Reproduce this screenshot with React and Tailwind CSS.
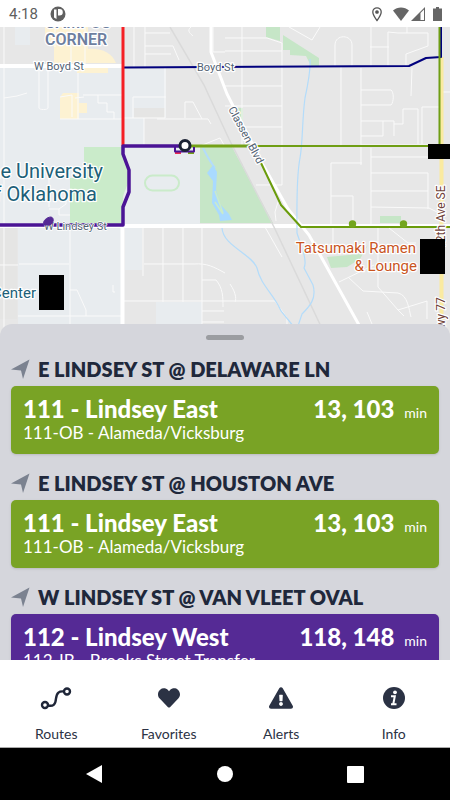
import React from "react";
import { FaHeart, FaExclamationTriangle } from "react-icons/fa";

const stops = [
  { name: "E LINDSEY ST @ DELAWARE LN", route: "111 - Lindsey East", detail: "111-OB - Alameda/Vicksburg", times: "13, 103", color: "bg-[#79a325]" },
  { name: "E LINDSEY ST @ HOUSTON AVE", route: "111 - Lindsey East", detail: "111-OB - Alameda/Vicksburg", times: "13, 103", color: "bg-[#79a325]" },
  { name: "W LINDSEY ST @ VAN VLEET OVAL", route: "112 - Lindsey West", detail: "112-IB - Brooks Street Transfer", times: "118, 148", color: "bg-[#552a95]" },
];

function RouteIcon() {
  return (
    <svg viewBox="0 0 32 24" className="h-6 w-8" fill="none" stroke="#1f2638" strokeWidth="2.400">
      <circle cx="5" cy="19" r="3" />
      <circle cx="27" cy="5.500" r="3" />
      <path d="M8 19.500c5 1 7.500-.5 8-7 .8-6 3-7.500 8-7" />
    </svg>
  );
}

function InfoIcon() {
  return (
    <svg viewBox="0 0 22 22" className="size-[22px]">
      <circle cx="11" cy="11" r="11" fill="#2b3244" />
      <circle cx="12" cy="5.300" r="1.900" fill="#fff" />
      <path d="M8 9.300h3.800l-1.500 7.700M8 17.300h5.500" fill="none" stroke="#fff" strokeWidth="2" />
    </svg>
  );
}

const tabs = [
  { label: "Routes", icon: <RouteIcon /> },
  { label: "Favorites", icon: <FaHeart className="size-[22px]" /> },
  { label: "Alerts", icon: <FaExclamationTriangle className="size-6" /> },
  { label: "Info", icon: <InfoIcon /> },
];

function StatusBar() {
  return (
    <header className="flex h-[27px] shrink-0 items-center justify-between bg-white pr-2 pl-[9px] text-[#606060]">
      <div className="flex items-center gap-3">
        <span className="text-[15px] leading-5">4:18</span>
        <svg viewBox="0 0 16 16" className="size-4" aria-hidden="true">
          <circle cx="8" cy="8" r="7.500" fill="#606060" />
          <path d="M4 3.500h2.500v9.500L4 11.500zM8 3h1.500a3.300 3.300 0 0 1 0 6.600H8z" fill="#fff" />
        </svg>
      </div>
      <div className="flex items-center" aria-hidden="true">
        <svg viewBox="0 0 12 16" className="mr-[10px] h-4 w-3" fill="none" stroke="#555" strokeWidth="1.300">
          <path d="M6 14.500C3 10.500 1.800 8 1.800 6a4.200 4.200 0 0 1 8.400 0c0 2-1.200 4.500-4.200 8.500z" />
          <circle cx="6" cy="6" r="1.200" fill="#555" />
        </svg>
        <svg viewBox="0 0 16 14" className="mr-[2px] h-[14px] w-4">
          <path d="M8 14 0 3.500C4.500-.5 11.500-.5 16 3.500z" fill="#666" />
        </svg>
        <svg viewBox="0 0 14 14" className="mr-2 size-[14px]">
          <path d="M14 0v14H0z" fill="#666" />
          <path d="M9.500 6 13 2.500V13H9.500z" fill="#fff" />
        </svg>
        <svg viewBox="0 0 9 14" className="h-[14px] w-[9px]">
          <path d="M3 0h3v1.500h3V14H0V1.500h3z" fill="#666" />
        </svg>
      </div>
    </header>
  );
}

function TransitMap() {
  return (
    <svg viewBox="0 27 450 310" preserveAspectRatio="xMidYMin slice" className="h-[310px] w-full shrink-0 font-[Roboto,sans-serif]" role="img" aria-label="Transit map">
      <rect y="27" width="450" height="310" fill="#e7e7e7" />
      <g fill="#e8ecef">
        <path d="M0 68H122V337H18V227H0z" />
        <path d="M124 69H166V118H144V145H200V224H124z" />
        <path d="M125 227h17v43h-17zM156 302h46v35h-46zM15 27h15v18H15z" />
      </g>
      <path d="M0 227h17v92H0zM134 108h31v10h-31z" fill="#e5e5e4" />
      <g fill="#fdf2d2">
        <path d="M45 27h43v22c14-1 24 4 28 14H54V47l-9-12zM77 67h31v6H77z" />
        <path d="M63 93h16v10h8v10h-8v6H60V97z" />
      </g>
      <g fill="#c6e6c7">
        <path d="M84 147h38l5 15 3 16-7 18v28H70v-46h14z" fill="#caebca" />
        <path d="M200 147h32l41 76h-73z" />
        <path d="M266 27h14v14l-14-4zM283 35l36 23v8h-8l-5-10-16-1v-5h-7zM238 108h5v14h-4zM380 216h21v7h-21zM327 257l33-3 8-9-8 14-13 8-16 1z" />
      </g>
      <rect x="145" y="175.500" width="34" height="15" rx="7.500" fill="none" stroke="#caebca" strokeWidth="2" />

      <g fill="none" stroke="#fafafa" strokeWidth="1">
        <path d="M4 27V337M55 27V47M71 27V66M85 27V66M39 69V108c0 2 9 2 9 0V69M78 73v46M4 98l13-2 10-3M60 119h62M83 95h39M98 95v8h9v9h7v7M60 97l12-2v22M75 98l9-1M49 177v30M49 209h10l7-5v-3M59 209v6h11M70 227v110M0 265h18M19 264h50M70 290h7l9 20v6M18 316h104M113 285v7h2" />
        <path d="M134 27v40M145 27v40M145 33h25M145 46h28l6 14M145 54h26M191 27c-5 4 0 7 2 9M213 27v25h12M133 97h33M133 97v21M124 118h41v-50M157 119h51l3 5M144 118v27M185 118v-16h8l9 17M200 146l20-8 4 7" />
        <path d="M242 27v120M225 38h42l15 5v104M225 51h57M225 86h57M225 106h57M242 127h40M289 27l23 13 8-13M335 66V45c0-11 17-11 17 0v21M371 27v39M370 47h19M388 67V32l10 1h30v13l-22 8v12M407 27v6M341 67v78M361 68v97M361 90h30c3 2 3 12 0 15h-30M361 121h33v15M383 121v15h-22M394 124h9v-15h15v35M422 144v-37h17M412 68l-1 28M443 92h7M361 145h77M371 148v77M371 157h70M371 173h57v36M371 191h57M371 207l58 1 10 5M331 163h31M331 163v62M331 196h22v29M282 147v38h-26M278 202l-3 10 1 9M312 227h-5" />
        <path d="M143 227v49M163 227v75M183 227v75M202 227v110M144 264h50c13-1 20 3 31 9M124 301h101M202 280h14c7 8 7 17 7 27M202 311h22M202 322h22M230 284c7 10 6 17 5 18M225 301h50l12 17v7M265 227l17 30M333 227v17M378 227v60l20 23 29-9v18M348 277l15 14 35 2c10 2 11 17 13 24M339 282l35-17M367 312l5 12M397 309l7 7M389 228l19 15h8" />
      </g>
      <g fill="none" stroke="#fff">
        <path d="M0 66h122" strokeWidth="4" />
        <path d="M0 226h450M122.500 225v112" strokeWidth="4" />
        <path d="M211 27v25l16 42 35 69 26 46 21 26 50 90" strokeWidth="3" />
      </g>
      <path d="M170 27l34 58 25 54 45 88 52 110" fill="none" stroke="#dadada" strokeWidth="1.500" />
      <g fill="none" stroke="#b4dcfa">
        <path d="M310 59c1 11-2 25-5 39-3 22-2 43-5 60-4 20-3 54-3 75 3 10 11 27 7 35l9 17c4 14-4 22-11 29l-5 15M222 228c1 18 30 26 35 40 4 18 17 26 24 43l13 16" strokeWidth="1.200" />
        <path d="M203 148c5 10 7 14 12 20" strokeWidth="2" />
      </g>
      <path d="M213 165l4 7-1 18 4 14 9 10 3 6-12 1-1-6-7-12 1-22-6-8z" fill="#a9daff" />
      <path d="M215 191l8 22M215 202l8 12" stroke="#caebca" strokeWidth="1.500" />
      <path d="M441.500 57v280" stroke="#faeaa0" strokeWidth="4" />

      <g fill="none" strokeLinejoin="round">
        <path d="M123 67.500 409 66l17-8 15-1V27" stroke="#00007d" strokeWidth="2" />
        <path d="M123 27v119" stroke="#f51f24" strokeWidth="3" />
        <path d="M184 146h68" stroke="#74a117" strokeWidth="3" />
        <path d="M252 146h188M439.500 27v119" stroke="#6f9e14" strokeWidth="2" />
        <path d="M261 163l20 42 20 22h149" stroke="#6a9c0b" strokeWidth="2" />
        <path d="M175 153h6" stroke="#e72b54" strokeWidth="2" />
        <path d="M188 153h6" stroke="#74a117" strokeWidth="2" />
        <path d="M175 147v4.500h19V147" stroke="#4b1495" strokeWidth="2" />
        <path d="M184 146h-61v8l6 16v22l-6 15v18H0" stroke="#4b1495" strokeWidth="3.500" />
      </g>
      <circle cx="185" cy="145.500" r="5" fill="#fff" stroke="#1c2334" strokeWidth="3" />
      <circle cx="352.500" cy="224" r="3.700" fill="#73a51e" />
      <circle cx="403.500" cy="224" r="3.700" fill="#73a51e" />

      <g stroke="#fff" strokeWidth="2.500" strokeLinejoin="round" paintOrder="stroke">
        <g fill="#6e7fa0" fontSize="16" fontWeight="600">
          <text x="45" y="27.500">CAMPUS</text>
          <text x="45" y="45">CORNER</text>
        </g>
        <g fill="#526273" fontSize="11">
          <text x="34" y="70">W Boyd St</text>
          <text x="197" y="71">Boyd St</text>
          <text x="44" y="230" strokeWidth="1.500">W Lindsey St</text>
          <text transform="translate(228 109) rotate(62)" fontSize="11">Classen Blvd</text>
        </g>
        <g fill="#205f78" textAnchor="end">
          <text x="103" y="178" fontSize="20">The University</text>
          <text x="97" y="201" fontSize="20">of Oklahoma</text>
          <text x="36" y="298" fontSize="15">Center</text>
        </g>
        <g fill="#c9541e" textAnchor="end" fontSize="15">
          <text x="416" y="253">Tatsumaki Ramen</text>
          <text x="417" y="271">&amp; Lounge</text>
        </g>
        <g fill="#704239" fontSize="12">
          <text transform="translate(445 249) rotate(-90)">12th Ave SE</text>
          <text transform="translate(445 337) rotate(-90)">Hwy 77</text>
        </g>
      </g>
      <path d="M44 225c-2-4 3-8 7-8 4 1 2 7-1 8z" fill="#552a95" stroke="#552a95" />
      <path d="M428 144h22v15h-22zM420 239h25v35h-25zM39 275h25v35H39z" fill="#000" />
    </svg>
  );
}

function Stop({ stop }) {
  return (
    <section>
      <h2 className="flex h-[34px] items-center gap-[7px] text-[20px] leading-[34px] font-extrabold whitespace-nowrap text-[#20283b]">
        <svg viewBox="0 0 20 20" className="size-5 shrink-0" aria-hidden="true">
          <path d="M18.500 .5 12 20 10 11.500 0 10.500z" fill="#7b8290" />
        </svg>
        {stop.name}
      </h2>
      <button className={`flex w-full items-start justify-between rounded-[5px] px-3 py-[10px] text-left text-white shadow ${stop.color}`}>
        <span className="flex flex-col whitespace-nowrap">
          <span className="text-[24px] leading-[26px] font-black">{stop.route}</span>
          <span className="text-[17px] leading-[22px]">{stop.detail}</span>
        </span>
        <span className="flex items-baseline gap-[10px] leading-[26px] whitespace-nowrap">
          <span className="text-[24px] font-black">{stop.times}</span>
          <span className="text-[14px]">min</span>
        </span>
      </button>
    </section>
  );
}

export default function App() {
  return (
    <div className="flex h-screen flex-col overflow-hidden bg-white font-[Roboto,sans-serif]">
      <StatusBar />
      <TransitMap />
      <main className="relative -mt-[13px] min-h-0 flex-1 overflow-hidden rounded-t-xl bg-[#d5d6dc] px-[11px] pt-[11px] font-[Lato,sans-serif]">
        <div className="mx-auto mb-3 h-[5px] w-[38px] rounded-full bg-[#9b9da1]" />
        <div className="flex flex-col gap-3">
          {stops.map((stop) => <Stop key={stop.name} stop={stop} />)}
        </div>
      </main>
      <nav className="grid h-[88px] shrink-0 grid-cols-4 border-b border-[#aaa] bg-white font-[Lato,sans-serif] text-[#2b3244]">
        {tabs.map((tab) => (
          <button key={tab.label} className="flex flex-col items-center pt-[26px]">
            <span className="flex h-6 items-center">{tab.icon}</span>
            <span className="mt-[14px] text-[14px] leading-5">{tab.label}</span>
          </button>
        ))}
      </nav>
      <footer className="flex h-[52px] shrink-0 items-center justify-center gap-[114px] bg-black">
        <button aria-label="Back"><svg viewBox="0 0 17 18" className="h-[18px] w-[17px]"><path d="M16 0v18L0 9z" fill="#fff" /></svg></button>
        <button aria-label="Home" className="size-4 rounded-full bg-white" />
        <button aria-label="Recent apps" className="size-[17px] rounded-[1px] bg-white" />
      </footer>
    </div>
  );
}
